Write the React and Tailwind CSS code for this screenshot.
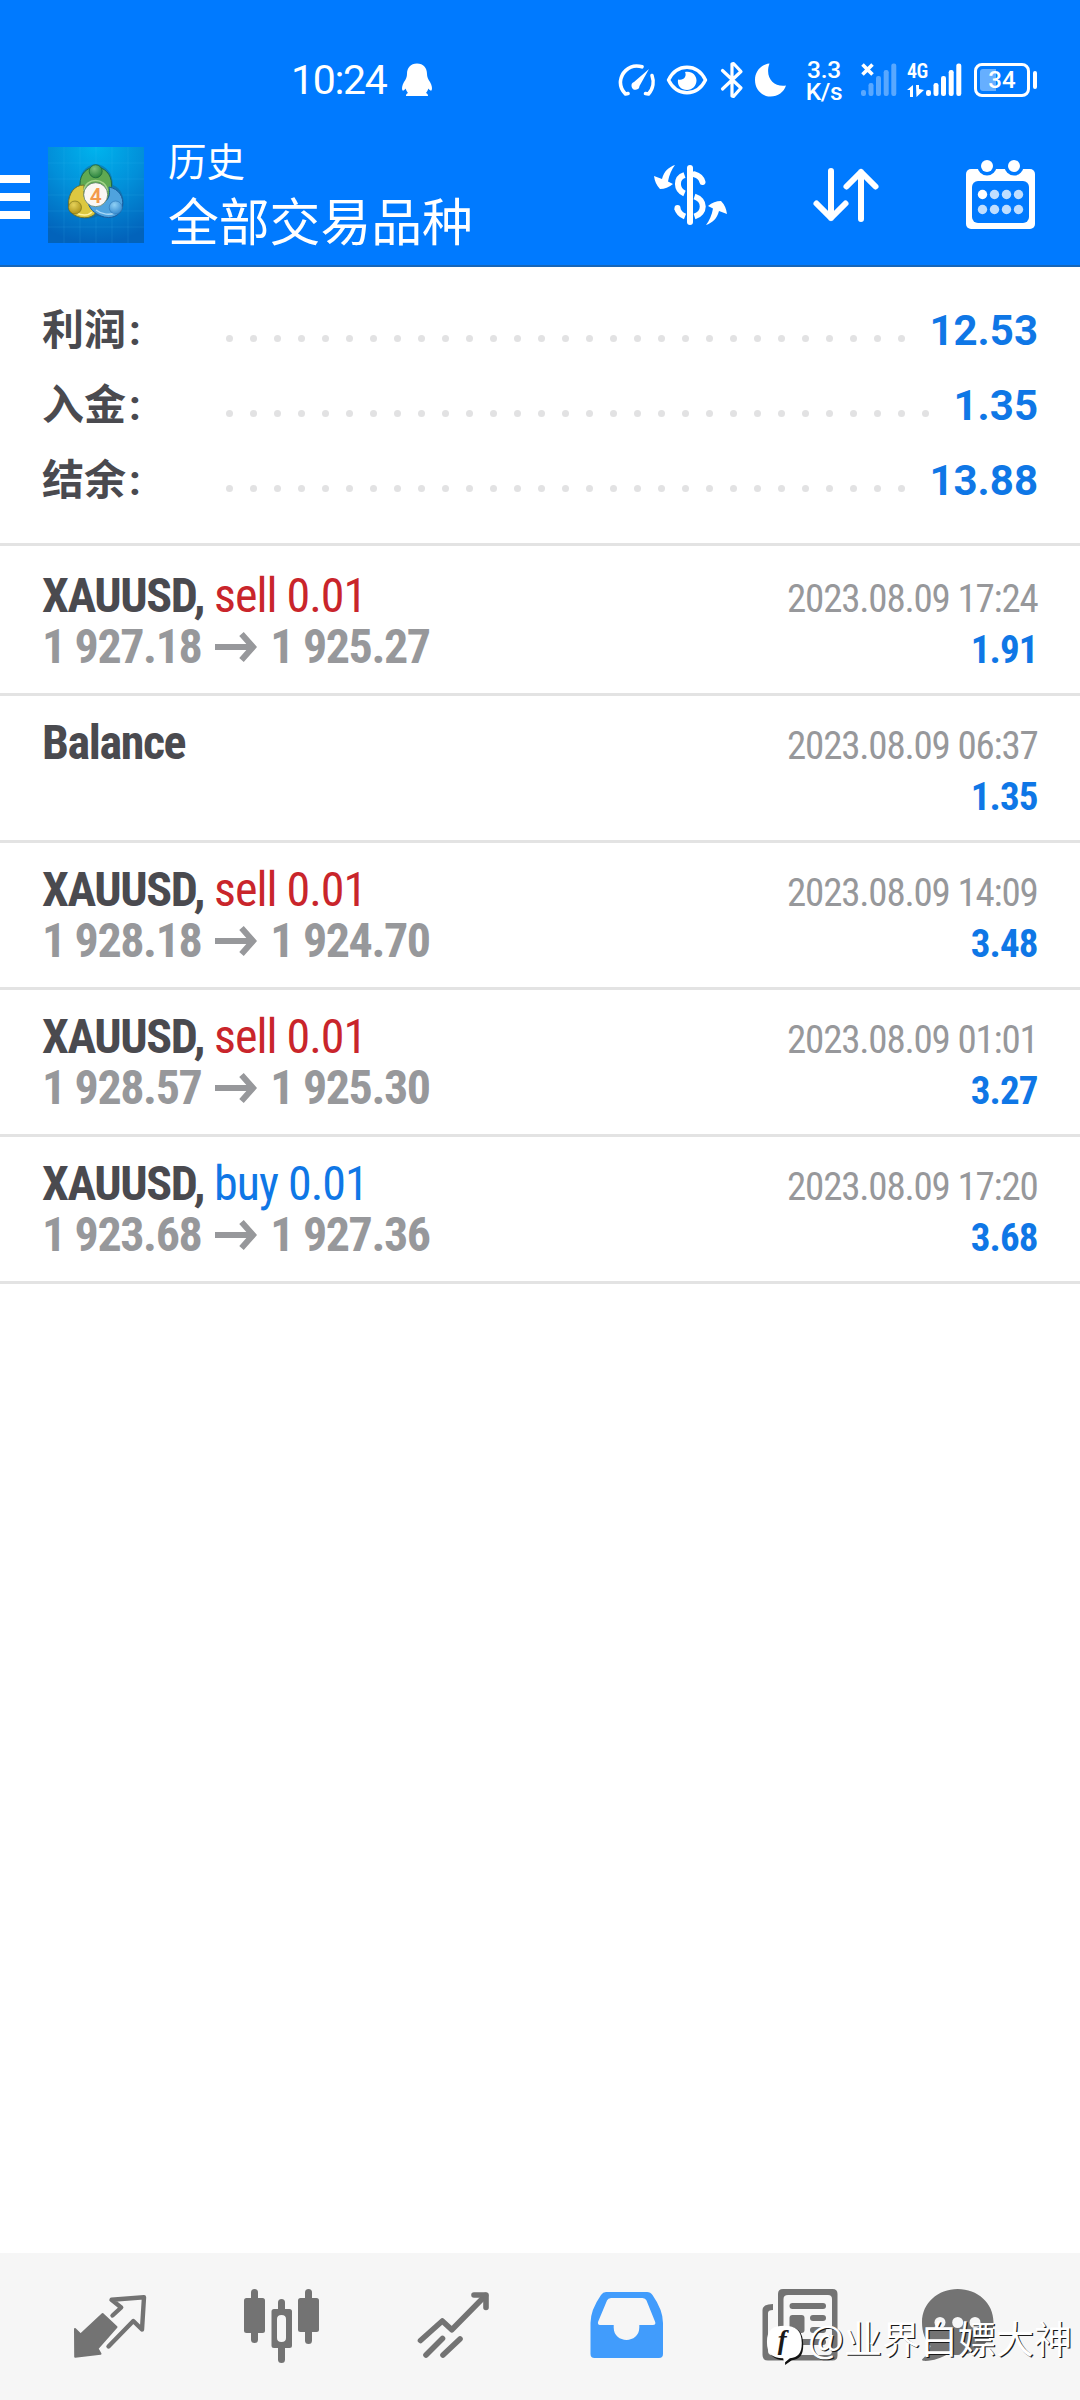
import React from 'react';

const summary = [
  { label: '利润', value: '12.53', dots: 29 },
  { label: '入金', value: '1.35', dots: 30 },
  { label: '结余', value: '13.88', dots: 29 },
];

const deals = [
  { symbol: 'XAUUSD', side: 'sell', volume: '0.01', open: '1 927.18', close: '1 925.27', time: '2023.08.09 17:24', profit: '1.91' },
  { symbol: 'Balance', time: '2023.08.09 06:37', profit: '1.35' },
  { symbol: 'XAUUSD', side: 'sell', volume: '0.01', open: '1 928.18', close: '1 924.70', time: '2023.08.09 14:09', profit: '3.48' },
  { symbol: 'XAUUSD', side: 'sell', volume: '0.01', open: '1 928.57', close: '1 925.30', time: '2023.08.09 01:01', profit: '3.27' },
  { symbol: 'XAUUSD', side: 'buy', volume: '0.01', open: '1 923.68', close: '1 927.36', time: '2023.08.09 17:20', profit: '3.68' },
];

const SignalBars = ({ className }) => (
  <svg className={className} width="36" height="34" viewBox="0 0 36 34" fill="currentColor">
    <rect x="0" y="27" width="5" height="6" rx="2.2" />
    <rect x="7.5" y="20" width="5" height="13" rx="2.2" />
    <rect x="15" y="13" width="5" height="20" rx="2.2" />
    <rect x="22.7" y="7" width="5" height="26" rx="2.2" />
    <rect x="30.3" y="0.5" width="5" height="32.5" rx="2.2" />
  </svg>
);

const StatusBar = () => (
  <div className="flex h-[117px] items-center pt-[42px] pl-[291px] text-white">
    <span className="w-[110px] pt-[2px] text-[41px] leading-none tracking-[-1.3px]">10:24</span>
    <svg className="h-[34px] w-[32px]" viewBox="0 0 32 34" fill="currentColor">
      <path d="M16 0.5C9.5 0.5 6 5 6 11C6 14 5 16 3 19C1 22.5 .5 26 1.5 27.5C2.5 28 4 26.5 4.8 25.5C5.2 27.5 6 28.8 7 30C5.5 30.5 5 31.5 5 33L27 33C27 31.5 26.5 30.5 25 30C26 28.8 26.8 27.5 27.2 25.5C28 26.5 29.5 28 30.5 27.5C31.5 26 31 22.5 29 19C27 16 26 14 26 11C26 5 22.5 .5 16 .5Z" />
    </svg>

    {/* speedometer */}
    <svg className="ml-[185px] h-[34px] w-[38px]" viewBox="0 0 38 34" fill="none" stroke="currentColor" strokeWidth="3.6" strokeLinecap="round" strokeLinejoin="round">
      <path d="M10 30.5L7.5 31C3.5 27 2 23 2.5 18C3.5 9.5 10.5 3 18.5 3C20.5 3 22.5 3.3 24 3.8" />
      <path d="M34 12.5C36 18 35.5 25.5 30.5 31L27.5 30.5" />
      <path d="M31 6L16 19A4 4 0 1 0 21.5 23Z" fill="currentColor" stroke="none" />
    </svg>

    {/* eye */}
    <svg className="ml-[10px] h-[32px] w-[42px]" viewBox="0 0 42 32">
      <path d="M2.5 16C11 -1 31 -1 39.5 16C31 33 11 33 2.5 16Z" fill="none" stroke="white" strokeWidth="3.4" strokeLinejoin="round" />
      <path d="M19 8C21 12 18 17 12 15.5C11 22 15.5 26 21 26C26.5 26 30.5 21.5 30.5 16.5C30.5 11 25.5 6.5 19 8Z" fill="white" />
    </svg>

    {/* bluetooth */}
    <svg className="ml-[12px] h-[38px] w-[24px]" viewBox="0 0 24 38" fill="none" stroke="currentColor" strokeWidth="3.2" strokeLinecap="round" strokeLinejoin="round">
      <path d="M2.5 9.5L21 27L13.5 35.5L12 35L12 3L13.5 2.5L21 10.5L2.5 28" />
    </svg>

    {/* moon */}
    <svg className="ml-[11px] h-[34px] w-[32px]" viewBox="0 0 32 34" fill="currentColor">
      <path d="M14.5 .5C5.5 1.5 0 9 0 17C0 26.5 7 33.5 15.5 33.5C23 33.5 29 29 31 22.5C18.5 24.5 9.5 14 14.5 .5Z" />
    </svg>

    <div className="ml-[17px] w-[40px] pt-[2px] text-center text-[24.5px] leading-[22px] font-medium tracking-[-0.3px]">
      <div>3.3</div>
      <div>K/s</div>
    </div>

    <div className="relative ml-[17px] h-[34px] w-[36px]">
      <SignalBars className="opacity-35" />
      <svg className="absolute top-0 left-0 h-[13px] w-[13px]" viewBox="0 0 13 13" stroke="white" strokeWidth="3.6">
        <path d="M1.5 1.5L11.5 11.5M11.5 1.5L1.5 11.5" />
      </svg>
    </div>

    <div className="relative ml-[29px] h-[34px] w-[36px]">
      <SignalBars />
      <span className="absolute top-[-2px] left-[-19px] font-['Roboto_Condensed'] text-[20px] leading-[20px] font-semibold tracking-[-0.5px]">4G</span>
      <svg className="absolute bottom-0 left-[-19px] h-[12px] w-[17px]" viewBox="0 0 17 12" fill="currentColor">
        <path d="M0 5L6 0V12H3V5Z" />
        <path d="M9 0H12V4L17 5L9.5 12Z" />
      </svg>
    </div>

    <div className="relative ml-[12px] flex h-[34px] w-[56px] items-center justify-center rounded-[8px] border-3 border-white">
      <div className="absolute top-[3px] bottom-[3px] left-[3px] w-[16px] rounded-l-[3px] bg-white/40" />
      <span className="relative text-[24px] leading-none font-medium">34</span>
    </div>
    <div className="ml-[3px] h-[18px] w-[4px] rounded-[2px] bg-white" />
  </div>
);

const AppLogo = () => (
  <svg className="h-[96px] w-[96px]" viewBox="0 0 96 96">
    <defs>
      <radialGradient id="logoBg" cx="0.5" cy="0" r="1">
        <stop offset="0" stopColor="#00b4ee" />
        <stop offset="0.5" stopColor="#028fd9" />
        <stop offset="1" stopColor="#0263bb" />
      </radialGradient>
      <radialGradient id="logoGreen" cx="0.4" cy="0.3" r="0.8">
        <stop offset="0" stopColor="#7fc07c" />
        <stop offset="1" stopColor="#1f7c34" />
      </radialGradient>
      <radialGradient id="logoYellow" cx="0.4" cy="0.3" r="0.8">
        <stop offset="0" stopColor="#e6d25a" />
        <stop offset="1" stopColor="#a58a10" />
      </radialGradient>
      <radialGradient id="logoBlue" cx="0.4" cy="0.3" r="0.8">
        <stop offset="0" stopColor="#8fd0f5" />
        <stop offset="1" stopColor="#2b83cc" />
      </radialGradient>
    </defs>
    <rect width="96" height="96" fill="url(#logoBg)" />
    <path d="M0 16H96M0 32H96M0 48H96M0 64H96M0 80H96M16 0V96M32 0V96M48 0V96M64 0V96M80 0V96" stroke="#5cc8f5" strokeOpacity="0.12" />
    <path d="M47.7 17C58 18 65 26 65 38C73 41 77 50 75 60C73 69 62 73 50 69C40 74 24 72 20 62C18 52 22 41 32 38C31 27 37 18 47.7 17Z" fill="#17628f" opacity="0.5" />
    <path d="M47.7 20C56 20 63.5 27 63.5 37C64 44 62 50 57 54L38 52C33 48 31.5 43 32 37C32 27 39 20 47.7 20Z" fill="#5fa952" stroke="#206c40" />
    <path d="M36 38C26 38 20.5 47 20.5 57C20.5 67 30 72 40 70.5C46 69 49 66 48 61L36 50Z" fill="#ddc840" stroke="#6d7430" />
    <path d="M61 40C71 42 76 50 74.5 59C73 69 63 73 53 69C46 66 42 62 40 56L58 54C62 50 62 45 61 40Z" fill="#4fa3de" stroke="#1a5c9f" />
    <path d="M36 44C37 30 58 30 59.5 44" fill="none" stroke="#a6d38b" strokeWidth="1.5" />
    <path d="M28 66C35 69 41 68 44 65" fill="none" stroke="#fff3a0" strokeWidth="1.5" />
    <path d="M48 63C54 68 62 68 67 66" fill="none" stroke="#a9d9f7" strokeWidth="1.5" />
    <circle cx="47.7" cy="24.3" r="6.5" fill="url(#logoGreen)" stroke="#1d6b3c" strokeWidth="0.8" />
    <circle cx="27" cy="60.5" r="6.5" fill="url(#logoYellow)" stroke="#6f6a18" strokeWidth="0.6" />
    <circle cx="67.7" cy="60.5" r="6.5" fill="url(#logoBlue)" stroke="#2b75b5" strokeWidth="0.6" />
    <circle cx="47.7" cy="47.7" r="12" fill="#fbf7f4" stroke="#5c7d68" strokeWidth="0.8" />
    <text x="47.7" y="55.5" textAnchor="middle" fontFamily="Roboto" fontSize="21" fontWeight="600" fill="#f39a4d">4</text>
  </svg>
);

const TradeArrow = () => (
  <path d="M24 3C18 5 13 9 11 17L3 14Q4 22 9 27Q16 27 22 22L17 19.5C18 13 21 7 24 3Z" fill="white" stroke="none" />
);

const AppBar = () => (
  <div className="flex h-[150px] items-center border-b-2 border-[#1766b8] pt-[6px] text-white">
    <div className="mt-[6px] flex w-[30px] flex-col gap-[10px]">
      <div className="h-[8px] bg-white" />
      <div className="h-[8px] bg-white" />
      <div className="h-[8px] bg-white" />
    </div>
    <div className="mt-[2px] ml-[18px]">
      <AppLogo />
    </div>
    <div className="mb-[4px] ml-[24px] flex-1 font-['Noto_Sans_CJK_SC',sans-serif]">
      <div className="text-[38.5px] leading-[54px]">历史</div>
      <div className="text-[50.8px] leading-[66px]">全部交易品种</div>
    </div>

    {/* currency */}
    <svg className="mt-[2px] h-[66px] w-[79px]" viewBox="0 0 79 66" fill="none" stroke="white" strokeWidth="6">
      <TradeArrow />
      <g transform="rotate(180 39.5 33)">
        <TradeArrow />
      </g>
      <path d="M39 6V60" strokeLinecap="round" />
      <path d="M33.5 13C24.5 16 25 28 33.5 31.5" />
      <path d="M43.5 12.3C48 13.5 50.5 16 51.5 20" strokeLinecap="round" />
      <path d="M43.5 34.5C54.5 38 54.5 51 43.5 54.5" />
      <path d="M26 46C27.5 51 30 53 34 54.5" />
      <circle cx="26.5" cy="46" r="3" fill="white" stroke="none" />
    </svg>

    {/* sort */}
    <svg className="mt-[2px] ml-[80px] h-[60px] w-[72px]" viewBox="0 0 72 60" fill="none" stroke="white" strokeWidth="6" strokeLinecap="round" strokeLinejoin="round">
      <path d="M21 6V53M6.5 38.5L21 53L35.5 38.5" />
      <path d="M51 54V7M36.5 21.5L51 7L65.5 21.5" />
    </svg>

    {/* calendar */}
    <svg className="mr-[42px] ml-[81px] h-[75px] w-[75px]" viewBox="0 0 75 75">
      <rect x="3" y="12" width="69" height="60" rx="5" fill="white" />
      <rect x="9" y="24" width="57" height="42" rx="6" fill="#007aff" />
      <circle cx="24" cy="9" r="9.5" fill="#007aff" />
      <circle cx="51" cy="9" r="9.5" fill="#007aff" />
      <circle cx="24" cy="9" r="6" fill="white" />
      <circle cx="51" cy="9" r="6" fill="white" />
      {[37.5, 52.5].map((y) =>
        [19.5, 31.5, 43.5, 55.5].map((x) => (
          <circle key={`${x}-${y}`} cx={x} cy={y} r="4.7" fill={x === 19.5 && y === 37.5 ? '#ffffff' : '#bfdeff'} />
        ))
      )}
    </svg>
  </div>
);

const SummaryRow = ({ item }) => (
  <div className="flex h-[75px] items-center justify-between">
    <span className="w-[184px] font-['Roboto','Noto_Sans_CJK_SC',sans-serif] text-[42px] leading-[75px] font-bold text-[#4a4a4f]">
      {item.label}<span className="ml-[3px]">:</span>
    </span>
    <div className="flex flex-1 gap-[17px] pt-[15px]">
      {Array.from({ length: item.dots }, (_, i) => (
        <span key={i} className="h-[7px] w-[7px] rounded-full bg-[#e2e2e3]" />
      ))}
    </div>
    <span className="text-[42px] leading-[75px] font-bold text-[#0f77e6]">{item.value}</span>
  </div>
);

const DealRow = ({ deal }) => (
  <div className="flex h-[147px] justify-between border-b-3 border-[#e3e3e3] px-[42px] pt-[21px] font-['Roboto_Condensed',sans-serif] first:h-[150px] first:pt-[24px]">
    <div className="text-[48px] leading-[51px] tracking-[-1.4px]">
      <div>
        <span className="font-bold text-[#4a4a4f]">{deal.symbol}{deal.side && ','}</span>
        {deal.side && (
          <span className={deal.side === 'sell' ? 'tracking-[-1px] text-[#c9252b]' : 'tracking-[-1px] text-[#0f77e6]'}>
            {' '}{deal.side} {deal.volume}
          </span>
        )}
      </div>
      {deal.open && (
        <div className="flex items-center font-bold text-[#97989b]">
          {deal.open}
          <svg className="mx-[13.5px] h-[30px] w-[42px]" viewBox="0 0 42 30" fill="none" stroke="currentColor" strokeWidth="6">
            <path d="M0 15H38M26.5 2L38 15L26.5 28" />
          </svg>
          {deal.close}
        </div>
      )}
    </div>
    <div className="pt-[4px] text-right text-[39px] leading-[51px]">
      <div className="mr-[0.5px] tracking-[-1.2px] text-[#97989b]">{deal.time}</div>
      <div className="mr-[0.5px] font-bold tracking-[-0.9px] text-[#0f77e6]">{deal.profit}</div>
    </div>
  </div>
);

const BottomNav = () => (
  <nav className="relative flex h-[147px] items-start bg-[#f6f6f6] pt-[32px] pl-[65px] text-[#737373]">
    {/* quotes */}
    <svg className="h-[90px] w-[90px]" viewBox="0 0 90 90" fill="none" stroke="currentColor" strokeLinejoin="round" strokeLinecap="round">
      <path d="M10 44L15.6 49.5L37.6 29L51.5 42L32.5 63.5L35.5 68.8L10.2 71.7Z" fill="currentColor" strokeWidth="2" />
      <path d="M47.5 30.5L56.2 22.5L46.5 14.8L79 12.3L77 44.5L68.3 36L43.5 61.5" strokeWidth="4.4" />
    </svg>

    {/* chart */}
    <svg className="ml-[82px] h-[90px] w-[90px]" viewBox="0 0 90 90" fill="currentColor">
      <rect x="14" y="4" width="7" height="54" rx="3.5" />
      <rect x="7" y="13" width="21" height="35" rx="2.5" />
      <rect x="41" y="14" width="7" height="14" rx="3.5" />
      <rect x="41" y="59" width="7" height="19" rx="3.5" />
      <path fillRule="evenodd" d="M37 24H52.5Q55 24 55 26.5V60.5Q55 63 52.5 63H37Q34.5 63 34.5 60.5V26.5Q34.5 24 37 24ZM44.5 30Q40 30 40 34V53Q40 57 44.5 57Q49 57 49 53V34Q49 30 44.5 30Z" />
      <rect x="68" y="4" width="7" height="55" rx="3.5" />
      <rect x="61" y="13" width="21" height="34" rx="2.5" />
    </svg>

    {/* trade */}
    <svg className="ml-[82px] h-[90px] w-[90px]" viewBox="0 0 90 90" fill="none" stroke="currentColor" strokeWidth="5.6" strokeLinecap="round" strokeLinejoin="round">
      <path d="M11.5 55.5L33.3 36L42.8 44.7L76.5 10.5" />
      <path d="M65 10H77V22.5" />
      <path d="M17 70L33.5 53.5M34 70L51 54" />
    </svg>

    {/* history */}
    <svg className="ml-[82px] h-[90px] w-[90px]" viewBox="0 0 90 90">
      <path
        fill="#419cfc"
        fillRule="evenodd"
        d="M25 7H66Q69.5 7 71.5 10Q82 25 82 38V69Q82 73 78 73H13.5Q9.5 73 9.5 69V38Q9.5 25 20 10Q22 7 25 7ZM30 13Q27 13 26 15.5L17 37Q16.5 40 19 40H32.7V42.5C32.7 59 58.3 59 58.3 42.5V40H72Q75 40 74.2 37L65.5 15.5Q64.5 13 61.5 13Z"
      />
    </svg>

    {/* news */}
    <svg className="ml-[84px] h-[90px] w-[90px]" viewBox="0 0 90 90" fill="currentColor">
      <path fillRule="evenodd" d="M28 4H77.5Q82.5 4 82.5 9V70.5Q82.5 75.5 77.5 75.5H13Q7.5 75.5 7.5 70V25Q7.5 19 18 19V25Q13 25 13 28V66Q13 70 17 70Q23 70 23 66V9Q23 4 28 4ZM33 10Q28.5 10 28.5 14V66Q28.5 70 33 70H73Q77 70 77 66V14Q77 10 73 10Z" />
      <rect x="34.5" y="18" width="36.5" height="6" rx="3" />
      <rect x="34.5" y="30" width="15" height="18" rx="3" />
      <rect x="55" y="30" width="16" height="6" rx="3" />
      <rect x="55" y="42" width="16" height="6" rx="3" />
      <rect x="34.5" y="54" width="36.5" height="6" rx="3" />
    </svg>

    {/* messages */}
    <svg className="ml-[68px] h-[90px] w-[90px]" viewBox="0 0 90 90">
      <path fill="currentColor" d="M44.7 4C64.5 4 80.5 18 80.5 37C80.5 56 64.5 70 44.7 70C41 70 38 69.5 35.5 69C28 73 19 76.5 10 75.8Q8 75 10 73.5C14 70 16.5 66 17.5 61C12 55 9 47 9 37C9 18 25 4 44.7 4Z" />
      <circle cx="27" cy="37.5" r="5.5" fill="#f6f6f6" />
      <circle cx="44.7" cy="37.5" r="5.5" fill="#f6f6f6" />
      <circle cx="62" cy="37.5" r="5.5" fill="#f6f6f6" />
    </svg>

    {/* author mark over the bar */}
    <div className="absolute top-[54px] right-[8px] flex items-center text-white">
      <svg className="mt-[14px] h-[46px] w-[42px]" viewBox="0 0 44 46">
        <path d="M21 5C33 5 39 10 39 24C39 35 35 39 27 40L20 45L20 40C8 40 3 35 3 23C3 10 9 5 21 5Z" fill="#111111" />
        <path d="M19.5 4C31 4 37.5 9 37.5 22C37.5 33 33.5 37 25 38L19 43L18 38C6 38 1 33 1 21C1 8 7 4 19.5 4Z" fill="white" />
        <text x="17" y="28" textAnchor="middle" fontFamily="Liberation Serif" fontStyle="italic" fontWeight="700" fontSize="28" fill="#1a1a1a">f</text>
      </svg>
      <span className="font-['Noto_Sans_CJK_SC',sans-serif] text-[38px] leading-[46px] [text-shadow:1.2px_1.2px_0_#1a1a1a]">@业界白嫖大神</span>
    </div>
  </nav>
);

export default function App() {
  return (
    <div className="flex h-[2400px] w-[1080px] flex-col overflow-hidden bg-white font-['Roboto',sans-serif]">
      <header className="bg-[#007aff]">
        <StatusBar />
        <AppBar />
      </header>
      <section className="h-[279px] border-b-3 border-[#e3e3e3] px-[42px] pt-[26px]">
        {summary.map((item) => (
          <SummaryRow key={item.label} item={item} />
        ))}
      </section>
      <main className="flex-1">
        {deals.map((deal) => (
          <DealRow key={deal.time} deal={deal} />
        ))}
      </main>
      <BottomNav />
    </div>
  );
}
